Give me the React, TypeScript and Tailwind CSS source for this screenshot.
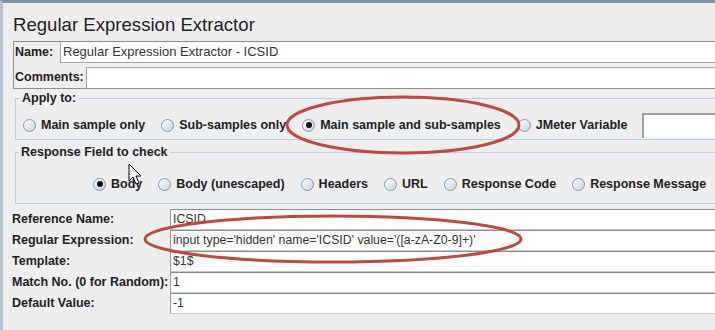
import React from "react";

function Radio({ checked }: { checked?: boolean }) {
  return (
    <span className="w-[13px] h-[13px] rounded-full border border-[#8192a5] bg-linear-to-br from-white to-[#c5d3e2] flex items-center justify-center shrink-0">
      {checked && <span className="w-[6px] h-[6px] rounded-full bg-[#111]" />}
    </span>
  );
}

function RadioItem({ label, checked }: { label: string; checked?: boolean }) {
  return (
    <span className="flex items-center gap-[5px] whitespace-nowrap">
      <Radio checked={checked} />
      <span className="font-bold text-[12.5px] text-[#222]">{label}</span>
    </span>
  );
}

function Field({ label, value }: { label: string; value: string }) {
  return (
    <div className="flex h-[21px]">
      <div className="w-[167px] pl-[9px] flex items-center font-bold text-[12.5px] text-[#222] whitespace-nowrap">
        {label}
      </div>
      <div className="flex-1 bg-white border-l border-t border-b border-l-[#9a9a9a] border-t-[#8c8c8c] border-b-[#c8c8c8] flex items-center pl-[2px] pb-[1px] text-[12.3px] text-[#333] whitespace-nowrap">
        {value}
      </div>
    </div>
  );
}

export default function App() {
  return (
    <div className="relative w-[715px] h-[330px] overflow-hidden bg-[#eeeeee] border-t-[3px] border-t-[#7d93a7] border-l-[3px] border-l-[#b3c2d1] font-['Liberation_Sans',Arial,sans-serif] text-[#222]">
      <div className="h-[38px] pl-[10px] pt-[5px] flex items-center text-[18.6px] text-[#222]">
        Regular Expression Extractor
      </div>

      <div className="ml-[10px] border border-r-0 border-[#8d8d8d] flex flex-col">
        <div className="flex h-[21px]">
          <div className="w-[46px] pl-[1px] flex items-center font-bold text-[12.5px]">Name:</div>
          <div className="flex-1 bg-white border-l border-b border-[#a3a3a3] flex items-center pl-[2px] text-[13px] text-[#333]">
            Regular Expression Extractor - ICSID
          </div>
        </div>
        <div className="flex h-[21px] mt-[4px]">
          <div className="w-[72px] pl-[1px] flex items-center font-bold text-[12.5px]">Comments:</div>
          <div className="flex-1 bg-white border-l border-t border-[#a3a3a3]" />
        </div>
      </div>

      <fieldset className="mt-[1px] ml-[12px] w-[720px] border border-[#b8cfe5]">
        <legend className="ml-[4px] px-[2px] font-bold text-[12.5px] leading-[16px]">Apply to:</legend>
        <div className="h-[33px] pt-[10px] pl-[7px]">
          <div className="h-[18px] flex items-center">
            <RadioItem label="Main sample only" />
            <span className="w-[16px]" />
            <RadioItem label="Sub-samples only" />
            <span className="w-[16px]" />
            <RadioItem label="Main sample and sub-samples" checked />
            <span className="w-[17px]" />
            <RadioItem label="JMeter Variable" />
            <div className="ml-[14px] w-[80px] h-[25px] bg-white border-t-2 border-l-2 border-[#a0a0a0]" />
          </div>
        </div>
      </fieldset>

      <fieldset className="mt-[4px] ml-[12px] w-[720px] border border-[#b8cfe5]">
        <legend className="ml-[3px] px-[2px] font-bold text-[12.5px] leading-[16px]">Response Field to check</legend>
        <div className="h-[43px] pt-[15px] pl-[77px]">
          <div className="h-[18px] flex items-center gap-[16px]">
            <RadioItem label="Body" checked />
            <RadioItem label="Body (unescaped)" />
            <RadioItem label="Headers" />
            <RadioItem label="URL" />
            <RadioItem label="Response Code" />
            <RadioItem label="Response Message" />
          </div>
        </div>
      </fieldset>

      <div className="mt-[5px] flex flex-col">
        <Field label="Reference Name:" value="ICSID" />
        <Field label="Regular Expression:" value="input type='hidden' name='ICSID' value='([a-zA-Z0-9]+)'" />
        <Field label="Template:" value="$1$" />
        <Field label="Match No. (0 for Random):" value="1" />
        <Field label="Default Value:" value="-1" />
      </div>

      <svg
        className="absolute pointer-events-none"
        style={{ left: -3, top: -3 }}
        width="715"
        height="330"
        viewBox="0 0 715 330"
      >
        <ellipse cx="403" cy="125" rx="116" ry="28" fill="none" stroke="#bf4843" strokeWidth="3" />
        <ellipse cx="333" cy="239" rx="188" ry="23" fill="none" stroke="#bf4843" strokeWidth="3" />
        <path
          d="M129 164 L129 181 L133 177 L136 184 L139 183 L136 176 L141 176 Z"
          fill="#fff"
          stroke="#000"
          strokeWidth="1"
          strokeLinejoin="round"
        />
      </svg>
    </div>
  );
}
